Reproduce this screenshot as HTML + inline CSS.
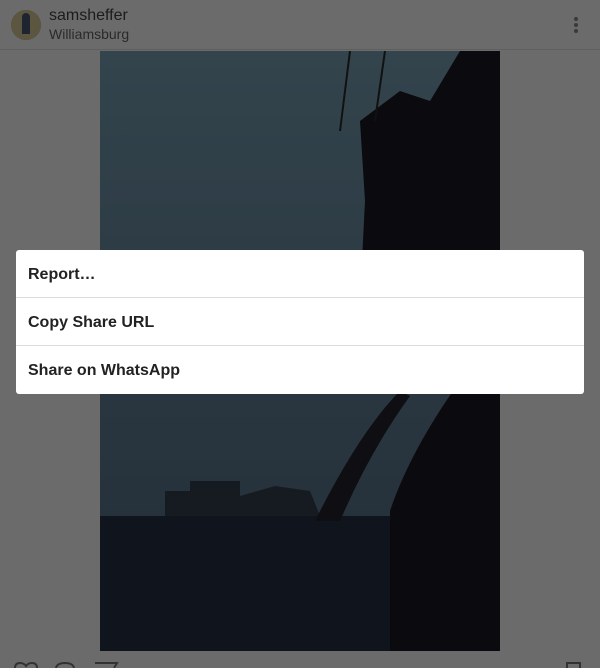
<!DOCTYPE html>
<html><head><style>
*{margin:0;padding:0;box-sizing:border-box}
body{width:600px;height:667px;background:#6b6b6b;position:relative;overflow:hidden;font-family:"Liberation Sans",sans-serif}
.hdr{position:absolute;left:0;top:0;width:600px;height:50px;border-bottom:1px solid #5e5e5e}
.av{position:absolute;left:11px;top:10px;width:30px;height:30px;border-radius:50%;background:#4a4638;overflow:hidden}
.n{position:absolute;left:49px;top:7px;font-size:16px;color:#1c1c1c}
.l{position:absolute;left:49px;top:26px;font-size:14px;color:#2a2a2a}
.dots{position:absolute;left:574px;top:17px}
.dots i{display:block;width:4px;height:4px;border-radius:50%;background:#3a3a3a;margin-bottom:2px}
svg.ph{position:absolute;left:100px;top:51px}
.dlg{position:absolute;left:16px;top:250px;width:568px;height:144px;background:#fff;border-radius:3px}
.dlg div{height:48px;line-height:50px;padding-left:12px;font-size:16px;font-weight:bold;color:#222;border-bottom:1px solid #dcdcdc}
.dlg div:last-child{border-bottom:none}
.ic{position:absolute;top:662px}
</style></head><body>
<div class="hdr">
<div class="av"><svg width="30" height="30"><rect width="30" height="30" fill="#5c5640"/><rect x="11" y="8" width="8" height="16" fill="#1e2430"/><circle cx="15" cy="7" r="4" fill="#1e2430"/></svg></div>
<div class="n">samsheffer</div><div class="l">Williamsburg</div>
<div class="dots"><i></i><i></i><i></i></div>
</div>
<svg class="ph" width="400" height="600" viewBox="0 0 400 600">
<defs><linearGradient id="s" x1="0" y1="0" x2="0" y2="1"><stop offset="0" stop-color="#33444d"/><stop offset="1" stop-color="#222c36"/></linearGradient></defs>
<rect width="400" height="600" fill="url(#s)"/>
<rect x="0" y="465" width="400" height="135" fill="#10151d"/>
<path d="M65 465 L65 440 L90 440 L90 430 L140 430 L140 445 L175 435 L210 440 L220 465Z" fill="#161b22"/>
<path d="M360 0 L400 0 L400 600 L290 600 L290 460 Q310 400 360 330 L340 330 L360 260 L340 250 L260 250 L265 150 L260 70 L300 40 L330 50 L360 0Z" fill="#0b0a0e"/>
<path d="M215 470 Q260 380 300 340 L310 345 Q270 400 240 470Z" fill="#0e0e13"/>
<line x1="250" y1="0" x2="240" y2="80" stroke="#111" stroke-width="2"/>
<line x1="285" y1="0" x2="275" y2="70" stroke="#111" stroke-width="2"/>
</svg>
<div class="dlg"><div>Report…</div><div>Copy Share URL</div><div>Share on WhatsApp</div></div>
<svg class="ic" style="left:13px" width="28" height="6"><path d="M2 6 Q2 1 7 1 Q11 1 13 4 Q15 1 19 1 Q24 1 24 6" fill="none" stroke="#333" stroke-width="2"/></svg>
<svg class="ic" style="left:54px" width="24" height="6"><path d="M2 6 Q3 1 11 1 Q19 1 20 6" fill="none" stroke="#333" stroke-width="2"/></svg>
<svg class="ic" style="left:94px" width="26" height="6"><path d="M1 1 H23 L20 6" fill="none" stroke="#333" stroke-width="2"/></svg>
<svg class="ic" style="left:565px" width="18" height="6"><path d="M2 6 V1 H15 V6" fill="none" stroke="#333" stroke-width="2"/></svg>
</body></html>
